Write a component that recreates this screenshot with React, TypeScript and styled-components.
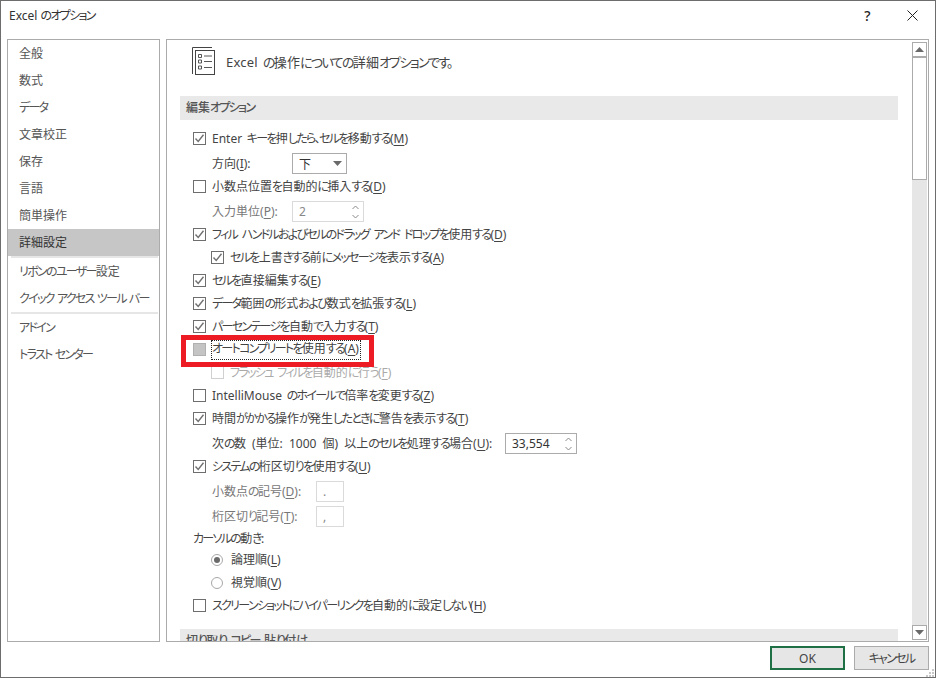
import React from "react";
import styled, { createGlobalStyle } from "styled-components";

const Global = createGlobalStyle`
  html, body { margin: 0; padding: 0; background: #fff; }
  body { font-family: "Noto Sans CJK JP", "Noto Sans", sans-serif; }
`;

const FONT = `"Noto Sans", "Noto Sans CJK JP", sans-serif`;

const Dialog = styled.div`
  width: 936px;
  height: 678px;
  box-sizing: border-box;
  border: 1px solid #6d6d6d;
  background: #fff;
  display: flex;
  flex-direction: column;
  font-family: ${FONT};
  font-feature-settings: "palt";
  font-size: 12px;
  word-spacing: 1.5px;
  color: #444;
  overflow: hidden;
`;

const TitleBar = styled.div`
  height: 38px;
  display: flex;
  align-items: flex-start;
  padding: 0 0 0 8px;
  color: #333;
  flex: none;
`;
const TitleText = styled.span`
  flex: 1;
  line-height: 30px;
  word-spacing: 0;
`;
const TitleButton = styled.div`
  width: 45px;
  height: 29px;
  display: flex;
  align-items: center;
  justify-content: center;
  color: #222;
  font-size: 14px;
  font-weight: 500;
`;

const Body = styled.div`
  flex: none;
  display: flex;
  gap: 6px;
  padding: 0 0 0 6px;
`;

const Nav = styled.div`
  width: 153px;
  flex: none;
  height: 603px;
  box-sizing: border-box;
  border: 1px solid #ababab;
  display: flex;
  flex-direction: column;
  word-spacing: 0;
`;
const NavItem = styled.div<{ $active?: boolean }>`
  height: 27px;
  box-sizing: border-box;
  padding: 0 0 2px 11px;
  flex: none;
  display: flex;
  align-items: center;
  white-space: pre;
  background: ${(p) => (p.$active ? "#c6c6c6" : "transparent")};
  color: ${(p) => (p.$active ? "#333" : "#555")};
`;
const NavDivider = styled.div`
  height: 2px;
  margin-left: 3px;
  width: 147px;
  background: #e6e6e6;
  flex: none;
`;

const Content = styled.div`
  width: 763px;
  flex: none;
  height: 603px;
  box-sizing: border-box;
  border: 1px solid #ababab;
  display: flex;
  position: relative;
`;
const Scroller = styled.div`
  flex: 1;
  min-width: 0;
  overflow: hidden;
  padding: 0 14px 0 13px;
`;
const Header = styled.div`
  height: 42px;
  margin-bottom: 14px;
  display: flex;
  align-items: center;
  padding-left: 12px;
  gap: 11px;
  font-size: 13px;
  color: #444;
`;
const HeaderText = styled.span`
  letter-spacing: 0.2px;
`;
const Section = styled.div`
  height: 24px;
  box-sizing: border-box;
  padding: 0 0 2px 6px;
  background: #e9e9e9;
  display: flex;
  align-items: center;
  color: #555;
  font-weight: 500;
  flex: none;
`;
const List = styled.div`
  padding-top: 7px;
  height: 509px;
  box-sizing: border-box;
`;
const Row = styled.div<{ $h?: number; $gap?: number; $indent: number; $tone?: "soft" | "faint" }>`
  height: ${(p) => p.$h ?? 23}px;
  margin-top: ${(p) => p.$gap ?? 0}px;
  display: flex;
  align-items: center;
  padding-left: ${(p) => p.$indent}px;
  color: ${(p) => (p.$tone === "faint" ? "#aaa" : p.$tone === "soft" ? "#777" : "#444")};
  white-space: pre;
`;
const Box = styled.span<{ $state: "on" | "off" | "mixed" | "dim" }>`
  width: 13px;
  height: 13px;
  box-sizing: border-box;
  flex: none;
  margin-right: 6px;
  border: 1px solid ${(p) => (p.$state === "dim" ? "#d0d0d0" : p.$state === "mixed" ? "#b0b0b0" : "#6e6e6e")};
  background: ${(p) => (p.$state === "mixed" ? "#c4c4c4" : "#fff")};
  display: flex;
  align-items: center;
  justify-content: center;
`;
const Radio = styled.span<{ $on?: boolean }>`
  width: 12px;
  height: 12px;
  box-sizing: border-box;
  flex: none;
  margin-right: 8px;
  border: 1px solid #a8a8a8;
  border-radius: 50%;
  display: flex;
  align-items: center;
  justify-content: center;
  &::after {
    content: "";
    width: 6px;
    height: 6px;
    border-radius: 50%;
    background: ${(p) => (p.$on ? "#6a6a6a" : "transparent")};
  }
`;
const Text = styled.span`
  margin-bottom: 1px;
`;
const FocusLabel = styled.span`
  height: 20px;
  line-height: 18px;
  box-sizing: border-box;
  margin-left: -1px;
  padding: 0 2px 0 1px;
  outline: 1px dotted #222;
  outline-offset: -1px;
`;
const FieldLabel = styled.span<{ $w: number; $wide?: boolean }>`
  width: ${(p) => p.$w}px;
  flex: none;
  padding-bottom: 1px;
  ${(p) => (p.$wide ? "word-spacing: 3px;" : "")}
`;
const U = styled.span`
  text-decoration: underline;
  text-underline-offset: 2px;
`;
const Kana = styled.span`
  letter-spacing: -1.7px;
`;
const Field = styled.span<{ $w: number; $dim?: boolean }>`
  width: ${(p) => p.$w}px;
  height: 21px;
  box-sizing: border-box;
  flex: none;
  border: 1px solid ${(p) => (p.$dim ? "#dadada" : "#ababab")};
  display: flex;
  align-items: center;
  justify-content: space-between;
  padding: 0 4px 0 6px;
  color: ${(p) => (p.$dim ? "#888" : "#333")};
`;
const HighlightBox = styled.div`
  position: absolute;
  left: 14px;
  top: 295px;
  width: 193px;
  height: 32px;
  box-sizing: border-box;
  border: 5px solid #ed1c24;
  pointer-events: none;
`;

const ScrollBar = styled.div`
  width: 15px;
  flex: none;
  margin: 2px 1px 1px 0;
  background: #e6e6e6;
  display: flex;
  flex-direction: column;
`;
const ScrollButton = styled.div`
  height: 15px;
  flex: none;
  background: #fff;
  border: 1px solid #ababab;
  box-sizing: border-box;
  display: flex;
  align-items: center;
  justify-content: center;
`;
const ScrollThumb = styled.div`
  height: 123px;
  flex: none;
  background: #fff;
  border: 1px solid #ababab;
  box-sizing: border-box;
`;
const ScrollGap = styled.div`
  flex: 1;
`;

const Footer = styled.div`
  flex: 1;
  display: flex;
  justify-content: flex-end;
  align-items: flex-start;
  gap: 9px;
  padding: 4px 6px 0 0;
  position: relative;
`;
const Btn = styled.div<{ $primary?: boolean }>`
  width: 75px;
  height: 24px;
  box-sizing: border-box;
  background: #e6e6e6;
  border: ${(p) => (p.$primary ? "2px solid #1f7145" : "1px solid #ababab")};
  display: flex;
  align-items: center;
  justify-content: center;
  color: #444;
`;
const Grip = styled.svg`
  position: absolute;
  right: 0;
  bottom: 0;
`;

const T = ({ children }: { children: string }) => (
  <>
    {children.split(/([\u3001-\u30ff]+)/).map((part, i) =>
      i % 2 === 1 ? <Kana key={i}>{part}</Kana> : <React.Fragment key={i}>{part}</React.Fragment>
    )}
  </>
);

const Check = () => (
  <svg width="11" height="11" viewBox="0 0 11 11">
    <path d="M1.5 5.5 L4.2 8.5 L9.5 1.8" fill="none" stroke="#707070" strokeWidth="1.4" />
  </svg>
);

const Chk = ({ s }: { s: "on" | "off" | "mixed" | "dim" }) => (
  <Box $state={s}>{s === "on" && <Check />}</Box>
);

const Spin = () => (
  <svg width="7" height="14" viewBox="0 0 7 14">
    <path d="M0.5 4 L3.5 1 L6.5 4 M0.5 10 L3.5 13 L6.5 10" fill="none" stroke="#8a8a8a" />
  </svg>
);

const OptionsIcon = () => (
  <svg width="23" height="28" viewBox="0 0 23 28" fill="none" stroke="#444">
    <path d="M0.5 27 V0.5 H20" />
    <rect x="3.5" y="3.5" width="19" height="24" />
    <path d="M6.5 7.5h3v3h-3z M6.5 13h3v3h-3z M6.5 19h3v3h-3z M12 9h8 M12 14.5h8 M12 20.5h8" strokeWidth="0.9" />
  </svg>
);

const Op = ({ a, k, colon }: { a: string; k: string; colon?: boolean }) => (
  <>
    <T>{a}</T>(<U>{k}</U>){colon ? ":" : ""}
  </>
);

const Line = ({ a, k }: { a: string; k: string }) => (
  <Text><Op a={a} k={k} /></Text>
);

export default function App() {
  return (
    <Dialog>
      <Global />
      <TitleBar>
        <TitleText><T>Excel のオプション</T></TitleText>
        <TitleButton>?</TitleButton>
        <TitleButton>
          <svg width="11" height="11" viewBox="0 0 11 11">
            <path d="M0.5 0.5 L10.5 10.5 M10.5 0.5 L0.5 10.5" stroke="#222" fill="none" />
          </svg>
        </TitleButton>
      </TitleBar>
      <Body>
        <Nav>
          <NavItem>全般</NavItem>
          <NavItem>数式</NavItem>
          <NavItem><span><T>データ</T></span></NavItem>
          <NavItem>文章校正</NavItem>
          <NavItem>保存</NavItem>
          <NavItem>言語</NavItem>
          <NavItem>簡単操作</NavItem>
          <NavItem $active>詳細設定</NavItem>
          <NavDivider />
          <NavItem><span><T>リボンのユーザー設定</T></span></NavItem>
          <NavItem><span><T>クイック アクセス ツール バー</T></span></NavItem>
          <NavDivider />
          <NavItem><span><T>アドイン</T></span></NavItem>
          <NavItem><span><T>トラスト センター</T></span></NavItem>
        </Nav>
        <Content>
          <Scroller>
            <Header>
              <OptionsIcon />
              <HeaderText><T>Excel の操作についての詳細オプションです。</T></HeaderText>
            </Header>
            <Section><span><T>編集オプション</T></span></Section>
            <List>
              <Row $indent={13}><Chk s="on" /><Line a="Enter キーを押したら、セルを移動する" k="M" /></Row>
              <Row $gap={2} $indent={32}>
                <FieldLabel $w={80}><Op a="方向" k="I" colon /></FieldLabel>
                <Field $w={55}>
                  下
                  <svg width="9" height="5" viewBox="0 0 9 5"><path d="M0 0h9L4.5 5z" fill="#6a6a6a" /></svg>
                </Field>
              </Row>
              <Row $indent={13}><Chk s="off" /><Line a="小数点位置を自動的に挿入する" k="D" /></Row>
              <Row $gap={2} $indent={32} $tone="soft">
                <FieldLabel $w={80}><Op a="入力単位" k="P" colon /></FieldLabel>
                <Field $w={72} $dim>2<Spin /></Field>
              </Row>
              <Row $indent={13}><Chk s="on" /><Line a="フィル ハンドルおよびセルのドラッグ アンド ドロップを使用する" k="D" /></Row>
              <Row $indent={31}><Chk s="on" /><Line a="セルを上書きする前にメッセージを表示する" k="A" /></Row>
              <Row $indent={13}><Chk s="on" /><Line a="セルを直接編集する" k="E" /></Row>
              <Row $indent={13}><Chk s="on" /><Line a="データ範囲の形式および数式を拡張する" k="L" /></Row>
              <Row $indent={13}><Chk s="on" /><Line a="パーセンテージを自動で入力する" k="T" /></Row>
              <Row $indent={13}><Chk s="mixed" /><FocusLabel><Op a="オートコンプリートを使用する" k="A" /></FocusLabel></Row>
              <Row $indent={31} $tone="faint"><Chk s="dim" /><Line a="フラッシュ フィルを自動的に行う" k="F" /></Row>
              <Row $indent={13}><Chk s="off" /><Line a="IntelliMouse のホイールで倍率を変更する" k="Z" /></Row>
              <Row $indent={13}><Chk s="on" /><Line a="時間がかかる操作が発生したときに警告を表示する" k="T" /></Row>
              <Row $gap={2} $indent={32}>
                <FieldLabel $w={293} $wide><Op a="次の数 (単位: 1000 個) 以上のセルを処理する場合" k="U" colon /></FieldLabel>
                <Field $w={72}>33,554<Spin /></Field>
              </Row>
              <Row $indent={13}><Chk s="on" /><Line a="システムの桁区切りを使用する" k="U" /></Row>
              <Row $gap={2} $indent={32} $tone="soft">
                <FieldLabel $w={104}><Op a="小数点の記号" k="D" colon /></FieldLabel>
                <Field $w={28} $dim>.</Field>
              </Row>
              <Row $gap={2} $indent={32} $tone="soft">
                <FieldLabel $w={104}><Op a="桁区切り記号" k="T" colon /></FieldLabel>
                <Field $w={28} $dim>,</Field>
              </Row>
              <Row $h={21} $indent={13}><Text><T>カーソルの動き</T>:</Text></Row>
              <Row $h={21} $indent={31}><Radio $on /><Line a="論理順" k="L" /></Row>
              <Row $gap={1} $indent={31}><Radio /><Line a="視覚順" k="V" /></Row>
              <Row $indent={13}><Chk s="off" /><Line a="スクリーンショットにハイパーリンクを自動的に設定しない" k="H" /></Row>
            </List>
            <Section><span><T>切り取り、コピー、貼り付け</T></span></Section>
          </Scroller>
          <ScrollBar>
            <ScrollButton>
              <svg width="9" height="5" viewBox="0 0 9 5"><path d="M0 5h9L4.5 0z" fill="#6a6a6a" /></svg>
            </ScrollButton>
            <ScrollThumb />
            <ScrollGap />
            <ScrollButton>
              <svg width="9" height="5" viewBox="0 0 9 5"><path d="M0 0h9L4.5 5z" fill="#6a6a6a" /></svg>
            </ScrollButton>
          </ScrollBar>
          <HighlightBox />
        </Content>
      </Body>
      <Footer>
        <Btn $primary>OK</Btn>
        <Btn><span><T>キャンセル</T></span></Btn>
        <Grip width="10" height="8" viewBox="0 0 10 8">
          <path d="M7 0h2v2H7z M4 3h2v2H4z M7 3h2v2H7z M1 6h2v2H1z M4 6h2v2H4z M7 6h2v2H7z" fill="#c8c8c8" />
        </Grip>
      </Footer>
    </Dialog>
  );
}
